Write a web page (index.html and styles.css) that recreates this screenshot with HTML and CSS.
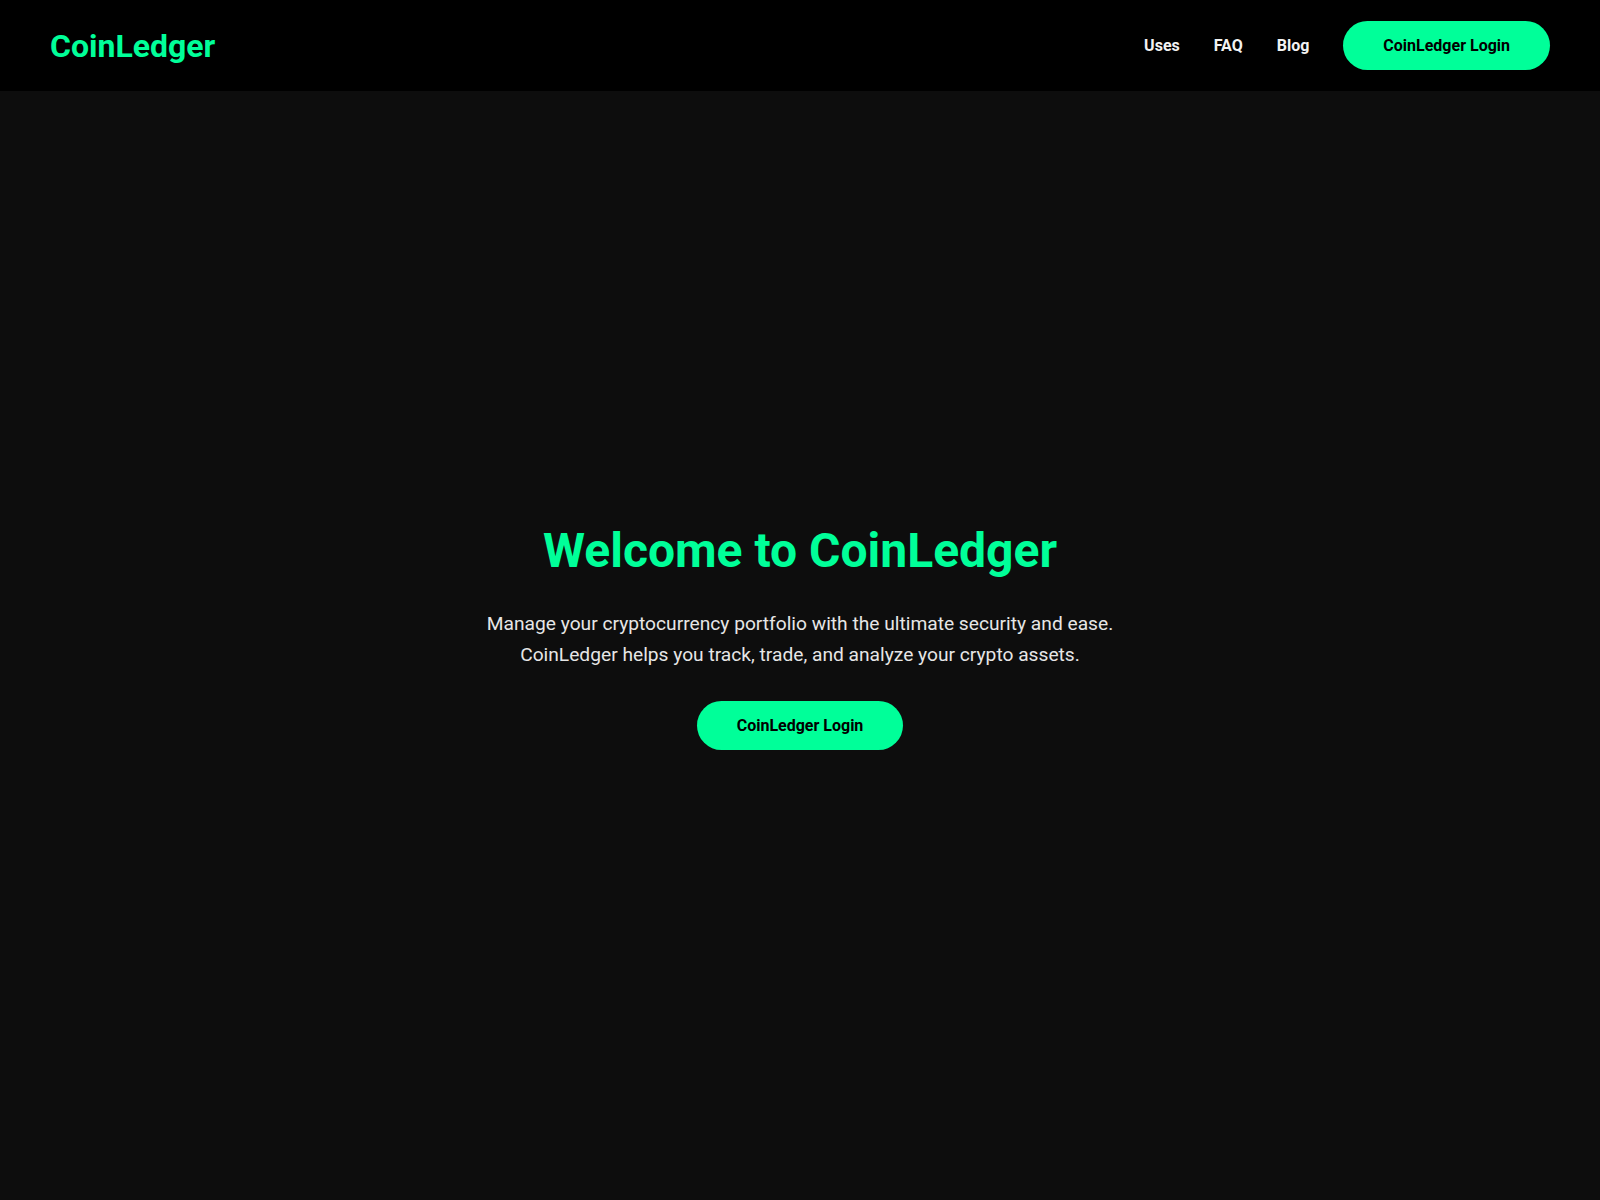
FILE: index.html
```html
<!DOCTYPE html>
<html lang="en">
<head>
<meta charset="utf-8">
<title>CoinLedger</title>
<link rel="stylesheet" href="styles.css">
</head>
<body>
<header class="site-header">
  <div class="logo">CoinLedger</div>
  <nav class="nav">
    <a class="nav-link" href="#">Uses</a>
    <a class="nav-link" href="#">FAQ</a>
    <a class="nav-link" href="#">Blog</a>
    <a class="btn" href="#">CoinLedger Login</a>
  </nav>
</header>
<main class="hero">
  <div class="hero-inner">
    <h1 class="hero-title">Welcome to CoinLedger</h1>
    <p class="hero-text">Manage your cryptocurrency portfolio with the ultimate security and ease.<br>CoinLedger helps you track, trade, and analyze your crypto assets.</p>
    <a class="btn" href="#">CoinLedger Login</a>
  </div>
</main>
</body>
</html>
```
FILE: styles.css
```css
* { box-sizing: border-box; }
html, body { margin: 0; padding: 0; }
body {
  background: #0d0d0d;
  color: #e6e6e6;
  font-family: Roboto, "Liberation Sans", sans-serif;
  min-height: 100vh;
  display: flex;
  flex-direction: column;
}
.site-header {
  height: 91px;
  background: #000;
  display: flex;
  align-items: center;
  justify-content: space-between;
  padding: 0 50px;
  flex-shrink: 0;
}
.logo {
  color: #00ff99;
  font-size: 32px;
  font-weight: 700;
  line-height: 1;
}
.nav {
  display: flex;
  align-items: center;
  gap: 34px;
}
.nav-link {
  color: #f2f2f2;
  text-decoration: none;
  font-weight: 700;
  font-size: 16px;
}
.btn {
  display: inline-block;
  background: #00ff99;
  color: #000;
  text-decoration: none;
  font-weight: 700;
  font-size: 16px;
  line-height: 21px;
  padding: 14px 40px;
  border-radius: 999px;
}
.hero {
  flex: 1;
  display: flex;
  align-items: center;
  justify-content: center;
  padding-bottom: 18px;
}
.hero-inner {
  text-align: center;
}
.hero-title {
  margin: 0 0 30px;
  color: #00ff99;
  font-size: 48px;
  font-weight: 700;
  line-height: 56px;
}
.hero-text {
  margin: 0 0 31px;
  font-size: 19.2px;
  line-height: 30.72px;
  color: #e6e6e6;
}
```
